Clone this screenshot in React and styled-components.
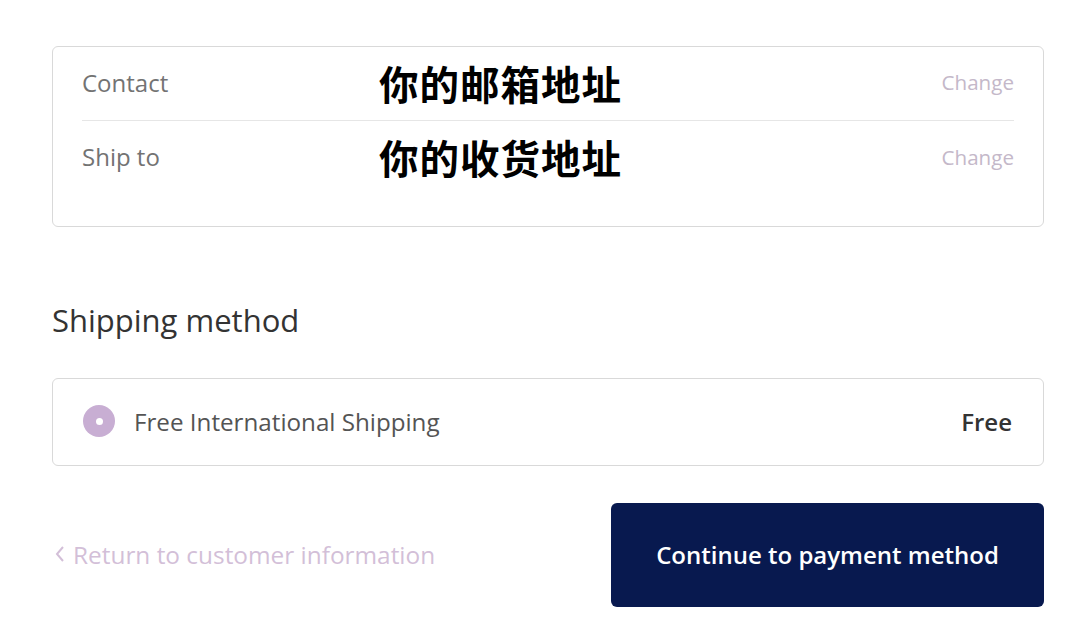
import React from 'react'
import styled, { createGlobalStyle } from 'styled-components'

const Global = createGlobalStyle`
  html, body { margin: 0; padding: 0; background: #fff; }
  body { font-family: "Open Sans", "Noto Sans", "Noto Sans CJK SC", sans-serif; }
`

const Page = styled.div`
  width: 1080px;
  box-sizing: border-box;
  padding: 46px 36px 0 52px;
`

const Card = styled.div`
  border: 1px solid #d9d9d9;
  border-radius: 6px;
  padding: ${p => p.pad || '0'};
  box-sizing: border-box;
`

const Row = styled.div`
  display: flex;
  align-items: center;
  height: 74px;
  box-sizing: border-box;
  padding-bottom: 3px;
  border-bottom: ${p => (p.divider ? '1px solid #e6e6e6' : 'none')};
`

const Label = styled.div`
  width: 297px;
  flex: none;
  font-size: 24px;
  color: #737373;
`

const Value = styled.div`
  flex: 1;
  font-family: "Noto Sans CJK SC", "Noto Sans", sans-serif;
  font-weight: 700;
  font-size: 39.5px;
  color: #000;
  letter-spacing: 1px;
`

const Change = styled.a`
  font-size: 20.6px;
  color: #c4b8c9;
  text-decoration: none;
`

const Heading = styled.h2`
  margin: 73px 0 38px;
  font-size: 31px;
  font-weight: 400;
  line-height: 40px;
  color: #333;
`

const MethodRow = styled.div`
  display: flex;
  align-items: center;
  height: 86px;
  padding: 0 31px 0 30px;
  box-sizing: border-box;
  padding-bottom: 2px;
`

const Radio = styled.span`
  width: 32px;
  height: 32px;
  border-radius: 50%;
  background: #c8aed3;
  display: flex;
  align-items: center;
  justify-content: center;
  flex: none;
  &::after {
    content: '';
    width: 7px;
    height: 7px;
    border-radius: 50%;
    background: #fff;
  }
`

const MethodName = styled.div`
  flex: 1;
  margin-left: 19px;
  font-size: 24.2px;
  color: #545454;
`

const Price = styled.div`
  font-size: 24px;
  font-weight: 600;
  color: #333;
`

const Footer = styled.div`
  display: flex;
  align-items: center;
  justify-content: space-between;
  margin-top: 37px;
`

const BackLink = styled.a`
  display: flex;
  align-items: center;
  gap: 8px;
  font-size: 24.4px;
  color: #d3bfd8;
  text-decoration: none;
  margin-left: 3px;
  padding-bottom: 2px;
`

const Button = styled.button`
  width: 433px;
  height: 104px;
  border: none;
  border-radius: 6px;
  background: #08194f;
  color: #fff;
  font-family: "Open Sans", sans-serif;
  font-weight: 600;
  font-size: 24px;
  padding-bottom: 3px;
  cursor: pointer;
`

export default function App() {
  return (
    <Page>
      <Global />
      <Card pad="0 29px 31px">
        <Row divider>
          <Label>Contact</Label>
          <Value>你的邮箱地址</Value>
          <Change href="#">Change</Change>
        </Row>
        <Row>
          <Label>Ship to</Label>
          <Value>你的收货地址</Value>
          <Change href="#">Change</Change>
        </Row>
      </Card>

      <Heading>Shipping method</Heading>

      <Card>
        <MethodRow>
          <Radio />
          <MethodName>Free International Shipping</MethodName>
          <Price>Free</Price>
        </MethodRow>
      </Card>

      <Footer>
        <BackLink href="#">
          <svg width="10" height="18" viewBox="0 0 10 18" fill="none">
            <path d="M8 2L2 9l6 7" stroke="#d3bfd8" strokeWidth="2" />
          </svg>
          Return to customer information
        </BackLink>
        <Button>Continue to payment method</Button>
      </Footer>
    </Page>
  )
}
